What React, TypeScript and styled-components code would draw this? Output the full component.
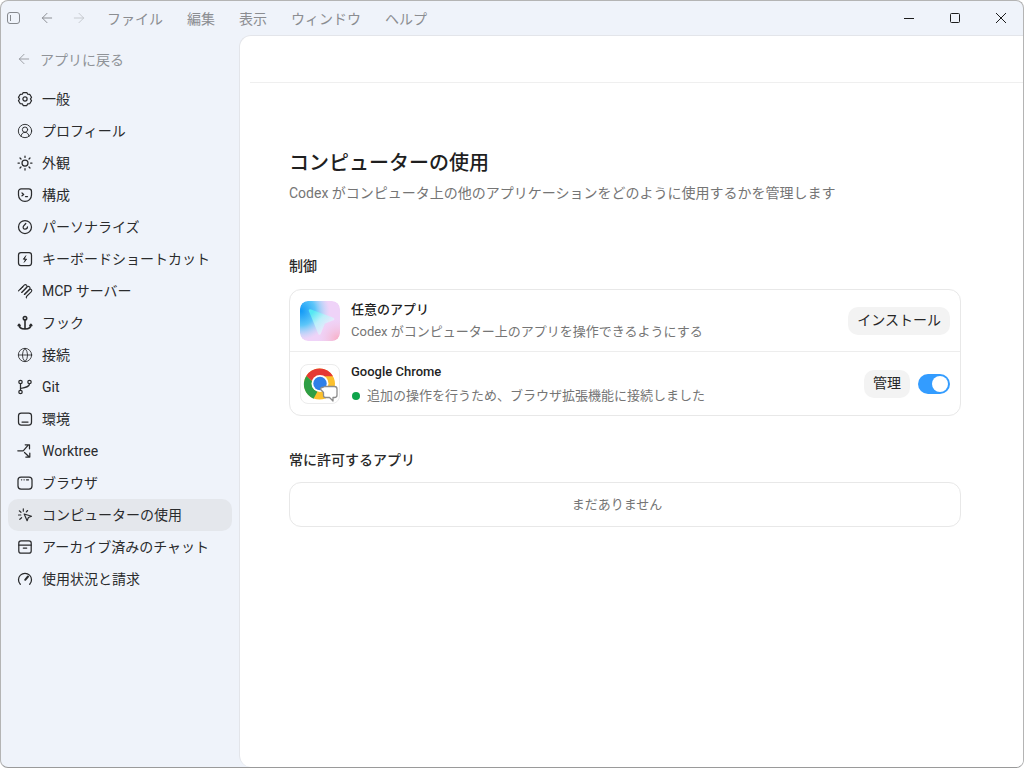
import React from "react";
import styled, { createGlobalStyle } from "styled-components";
import { ArrowLeft, ArrowRight, CircleUserRound, Globe } from "lucide-react";

const GlobalStyle = createGlobalStyle`
  html, body { margin: 0; padding: 0; height: 100%; background: #fff; }
  body { font-family: Roboto, "Noto Sans CJK JP", sans-serif; color: #1f1f1f; }
  * { box-sizing: border-box; }
`;

const Svg = ({ children, strokeWidth = 1.25 }: { children: React.ReactNode; strokeWidth?: number }) => (
  <svg width={16} height={16} viewBox="0 0 16 16" fill="none" stroke="currentColor" strokeWidth={strokeWidth} strokeLinecap="round" strokeLinejoin="round">
    {children}
  </svg>
);

const GearIcon = () => (
  <Svg>
    <path d="M6.200 1.500h3.600l.9 1.700 2 .1 1.800 3-1.100 1.700 1.100 1.700-1.800 3-2 .1-.9 1.700H6.200l-.9-1.700-2-.1-1.800-3L2.600 8 1.500 6.300l1.800-3 2-.1z" />
    <circle cx="8" cy="8" r="2.100" />
  </Svg>
);
const SunIcon = () => (
  <Svg>
    <circle cx="8" cy="8" r="3" />
    <path d="M8 1v1.400M8 13.600V15M1 8h1.400M13.600 8H15M3 3l1 1M12 12l1 1M3 13l1-1M12 4l1-1" />
  </Svg>
);
const TerminalShield = () => (
  <Svg>
    <path d="M4.200 1.800h7.600a2.700 2.700 0 0 1 2.700 2.700V8A6.500 6.500 0 0 1 1.500 8V4.500a2.700 2.700 0 0 1 2.700-2.700z" />
    <path d="M5 6l1.700 1.400L5 8.800M8.500 9.500h2" />
  </Svg>
);
const PersonalIcon = () => (
  <Svg>
    <circle cx="8" cy="8" r="6.500" />
    <path d="M8.800 4.500L6.500 7.200c-.9 1.300 0 3 1.500 3s2.500-1 2.500-2.400" />
  </Svg>
);
const KeyboardIcon = () => (
  <Svg>
    <rect x="1.500" y="1.500" width="13" height="13" rx="2.500" />
    <path d="M8.800 4.800L6.400 8.200h3.200L7.200 11.200" fill="currentColor" strokeWidth="1" />
  </Svg>
);
const McpIcon = () => (
  <Svg strokeWidth={1.1}>
    <path d="M1.500 7.800L7.200 2.100a1.700 1.700 0 0 1 2.400 2.400L4.800 9.300" />
    <path d="M4.800 9.300l5.400-5.400a1.700 1.700 0 0 1 2.400 2.400L7.400 11.500" />
    <path d="M7.400 11.500l5-5a1.500 1.500 0 0 1 2 2.200L9.500 13.500a1 1 0 0 0 0 1.300" />
    <path d="M4.300 5.300L3.500 6.100M6 3.700L5.200 4.500" />
  </Svg>
);
const AnchorIcon = () => (
  <Svg strokeWidth={1.6}>
    <circle cx="8" cy="3.200" r="1.700" />
    <path d="M8 5v9M2 9.500c0 2.800 2.500 4.500 6 4.500s6-1.700 6-4.500M1.200 10.500l.9-1.200 1 1.200M12.900 10.500l1-1.200.9 1.200" />
  </Svg>
);
const GitIcon = () => (
  <Svg>
    <circle cx="3.500" cy="3" r="1.700" />
    <circle cx="12.500" cy="3" r="1.700" />
    <circle cx="3.500" cy="13" r="1.700" />
    <path d="M3.500 4.700v6.600M12.500 4.700c0 3-3.500 3.800-9 4.800" />
  </Svg>
);
const EnvIcon = () => (
  <Svg>
    <rect x="1.500" y="2" width="13" height="12" rx="2.800" />
    <path d="M5 11h6" />
  </Svg>
);
const WorktreeIcon = () => (
  <Svg>
    <path d="M.8 7.800h5.400L11.200 2.200M8.200 1.800h4.300v4M7.500 9.500l4.500 4.300M12.800 10v4H8.800" />
  </Svg>
);
const BrowserIcon = () => (
  <Svg>
    <rect x="1" y="2" width="14" height="12" rx="3" />
    <path d="M4.500 4.800h.2M7 4.800h.2M9.500 4.800h2" />
  </Svg>
);
const ComputerIcon = () => (
  <Svg strokeWidth={1.15}>
    <path d="M7.200 7L14.500 9.300l-3.100 1.200-1.300 3.200z" />
    <path d="M6.300 1.800v2.400M2.300 3.800L4 5.300M1.500 8h2.300M2.800 12.300L4.600 10.700M10.600 3.500L9.300 5" />
  </Svg>
);
const ArchiveIcon = () => (
  <Svg>
    <rect x="1.800" y="1.800" width="12.400" height="12.400" rx="2.200" />
    <path d="M1.800 6h12.400M6.300 9h3.400" />
  </Svg>
);
const GaugeIcon = () => (
  <Svg>
    <path d="M3.300 13.300A6.500 6.500 0 1 1 12.700 13.300" />
    <path d="M11 5.500L8.200 8.800" strokeWidth="2" />
  </Svg>
);

const AnyAppLogo = () => (
  <svg width="40" height="40" viewBox="0 0 40 40">
    <defs>
      <radialGradient id="blobBlue" cx="0.02" cy="0.25" r="0.72">
        <stop offset="0" stopColor="#1299f6" />
        <stop offset="0.5" stopColor="#5cc6f9" />
        <stop offset="1" stopColor="#a8dcfa" stopOpacity="0" />
      </radialGradient>
      <radialGradient id="blobPink" cx="0.95" cy="0.95" r="0.5">
        <stop offset="0" stopColor="#f9aec4" />
        <stop offset="1" stopColor="#f2c9e8" stopOpacity="0" />
      </radialGradient>
      <linearGradient id="anyArrow" x1="0.1" y1="0.1" x2="0.8" y2="0.8">
        <stop offset="0" stopColor="#55e8f3" />
        <stop offset="0.45" stopColor="#bdeffa" />
        <stop offset="1" stopColor="#f3e8fc" />
      </linearGradient>
      <filter id="soft">
        <feGaussianBlur stdDeviation="0.7" />
      </filter>
    </defs>
    <rect width="40" height="40" rx="8" fill="#efd3f8" />
    <rect width="40" height="40" rx="8" fill="url(#blobBlue)" />
    <rect width="40" height="40" rx="8" fill="url(#blobPink)" />
    <path
      d="M10 9.500L33 18 24 21.500 19.500 32.500z"
      fill="url(#anyArrow)"
      stroke="url(#anyArrow)"
      strokeWidth="2.500"
      strokeLinejoin="round"
      filter="url(#soft)"
    />
  </svg>
);

const ChromeLogo = () => (
  <svg width="38" height="38" viewBox="0 0 38 38">
    <circle cx="18.500" cy="19" r="15.500" fill="#fbc02d" />
    <path d="M18.500 3.500A15.500 15.500 0 0 1 32 11.300H18.500a7.800 7.800 0 0 0-7.300 5L5.300 11A15.500 15.500 0 0 1 18.500 3.500z" fill="#e53935" />
    <path d="M5.300 11l6 5.400a7.800 7.800 0 0 0 5.200 10l-4 7.300A15.500 15.500 0 0 1 5.300 11z" fill="#2e9e45" />
    <circle cx="19" cy="18.500" r="8.500" fill="#fff" />
    <circle cx="19" cy="18.500" r="6.700" fill="#2f7fe8" />
    <path
      d="M24 21.500h9.500a2.500 2.500 0 0 1 2.500 2.500v6a2.500 2.500 0 0 1-2.500 2.500H32v3.500l-3.500-3.500h-4a2 2 0 0 1-2-2v-3l-2-2.200a1.500 1.500 0 0 1 1-2.800z"
      fill="#fff"
      stroke="#8c8c8c"
      strokeWidth="1.300"
      strokeLinejoin="round"
    />
  </svg>
);

const Window = styled.div`
  width: 1024px;
  height: 768px;
  display: flex;
  flex-direction: column;
  background: #eff3fa;
  border: 1px solid #b4b4b4;
  border-bottom-color: #9a9a9a;
  border-radius: 8px;
  overflow: hidden;
`;

const TitleBar = styled.div`
  height: 34px;
  flex: none;
  display: flex;
  align-items: center;
  padding-left: 6px;
`;

const BarIcon = styled.span<{ $dim?: boolean }>`
  display: flex;
  margin-right: 16px;
  color: ${(p) => (p.$dim ? "#c4c7cc" : "#85888d")};
`;

const PanelToggle = styled.span`
  width: 13px;
  height: 12px;
  margin-right: 19px;
  border: 1px solid #85888d;
  border-radius: 3px;
  display: flex;
  padding: 2px 0 2px 2px;
  &::before {
    content: "";
    width: 1px;
    background: #85888d;
  }
`;

const MenuRow = styled.div`
  display: flex;
  gap: 24px;
  margin-left: 4px;
`;

const MenuLabel = styled.span`
  font-size: 14px;
  color: #8b8d91;
`;

const WindowControls = styled.div`
  margin-left: auto;
  margin-right: -1px;
  display: flex;
  height: 100%;
`;

const ControlButton = styled.span`
  width: 46px;
  height: 100%;
  display: flex;
  align-items: center;
  justify-content: center;
  color: #1c1c1c;
`;

const Body = styled.div`
  flex: 1;
  display: flex;
  min-height: 0;
`;

const Sidebar = styled.nav`
  width: 238px;
  flex: none;
  padding: 0 7px;
  display: flex;
  flex-direction: column;
`;

const BackLink = styled.div`
  height: 48px;
  display: flex;
  align-items: center;
  gap: 8px;
  padding-left: 8px;
  font-size: 14px;
  color: #909398;
`;

const NavItem = styled.div<{ $active?: boolean }>`
  height: 32px;
  display: flex;
  align-items: center;
  gap: 9px;
  padding-left: 9px;
  border-radius: 10px;
  font-size: 14px;
  line-height: 20px;
  color: #2a2b2d;
  background: ${(p) => (p.$active ? "#e4e7ec" : "transparent")};
`;

const Main = styled.main`
  flex: 1;
  background: #fff;
  border-top: 1px solid #e3e5ea;
  border-left: 1px solid #e3e5ea;
  border-top-left-radius: 12px;
  border-bottom-left-radius: 12px;
  display: flex;
  flex-direction: column;
`;

const TopStrip = styled.div`
  height: 47px;
  flex: none;
  margin-left: 10px;
  border-bottom: 1px solid #efefef;
`;

const Content = styled.div`
  width: 672px;
  margin-left: 49px;
  padding-top: 67px;
`;

const Heading = styled.h1`
  margin: 0;
  font-size: 20px;
  line-height: 26px;
  font-weight: 500;
  color: #1f1f1f;
`;

const Subheading = styled.p`
  margin: 6px 0 0;
  font-size: 14px;
  line-height: 22px;
  color: #757575;
`;

const SectionTitle = styled.h2<{ $top: number; $bottom: number }>`
  margin: ${(p) => p.$top}px 0 ${(p) => p.$bottom}px;
  font-size: 14px;
  line-height: 20px;
  font-weight: 500;
  color: #2a2a2a;
`;

const Card = styled.div`
  border: 1px solid #e8e8e8;
  border-radius: 12px;
`;

const Row = styled.div<{ $height: number }>`
  height: ${(p) => p.$height}px;
  display: flex;
  align-items: center;
  padding: 0 10px;
  & + & {
    border-top: 1px solid #ededed;
  }
`;

const LogoBox = styled.div<{ $framed?: boolean }>`
  width: 40px;
  height: 40px;
  flex: none;
  border-radius: 8px;
  overflow: hidden;
  display: flex;
  align-items: center;
  justify-content: center;
  margin-right: 11px;
  border: ${(p) => (p.$framed ? "1px solid #ececec" : "none")};
`;

const RowText = styled.div<{ $gap: number }>`
  flex: 1;
  display: flex;
  flex-direction: column;
  gap: ${(p) => p.$gap}px;
`;

const RowTitle = styled.div`
  font-size: 13px;
  line-height: 20px;
  font-weight: 500;
  color: #1f1f1f;
`;

const RowDesc = styled.div`
  display: flex;
  align-items: center;
  gap: 7px;
  font-size: 13px;
  line-height: 20px;
  color: #757575;
`;

const StatusDot = styled.span`
  width: 8px;
  height: 8px;
  margin-left: 1px;
  border-radius: 50%;
  background: #0ea44b;
`;

const PillButton = styled.button`
  all: unset;
  height: 28px;
  padding: 0 9px;
  border-radius: 10px;
  background: #f3f3f3;
  font-size: 14px;
  line-height: 27px;
  color: #262626;
`;

const Toggle = styled.span`
  width: 32px;
  height: 20px;
  margin-left: 8px;
  border-radius: 10px;
  background: #339cff;
  display: flex;
  justify-content: flex-end;
  align-items: center;
  padding-right: 2px;
  &::after {
    content: "";
    width: 16px;
    height: 16px;
    border-radius: 50%;
    background: #fff;
  }
`;

const EmptyCard = styled(Card)`
  height: 45px;
  display: flex;
  align-items: center;
  justify-content: center;
  padding: 0 16px 2px 0;
  font-size: 13px;
  color: #757575;
`;

const navItems: { icon: React.ReactNode; label: string; active?: boolean }[] = [
  { icon: <GearIcon />, label: "一般" },
  { icon: <CircleUserRound size={16} strokeWidth={1.4} />, label: "プロフィール" },
  { icon: <SunIcon />, label: "外観" },
  { icon: <TerminalShield />, label: "構成" },
  { icon: <PersonalIcon />, label: "パーソナライズ" },
  { icon: <KeyboardIcon />, label: "キーボードショートカット" },
  { icon: <McpIcon />, label: "MCP サーバー" },
  { icon: <AnchorIcon />, label: "フック" },
  { icon: <Globe size={16} strokeWidth={1.3} />, label: "接続" },
  { icon: <GitIcon />, label: "Git" },
  { icon: <EnvIcon />, label: "環境" },
  { icon: <WorktreeIcon />, label: "Worktree" },
  { icon: <BrowserIcon />, label: "ブラウザ" },
  { icon: <ComputerIcon />, label: "コンピューターの使用", active: true },
  { icon: <ArchiveIcon />, label: "アーカイブ済みのチャット" },
  { icon: <GaugeIcon />, label: "使用状況と請求" },
];

const menus = ["ファイル", "編集", "表示", "ウィンドウ", "ヘルプ"];

export default function App() {
  return (
    <>
      <GlobalStyle />
      <Window>
        <TitleBar>
          <PanelToggle />
          <BarIcon>
            <ArrowLeft size={16} strokeWidth={1.4} />
          </BarIcon>
          <BarIcon $dim>
            <ArrowRight size={16} strokeWidth={1.4} />
          </BarIcon>
          <MenuRow>
            {menus.map((m) => (
              <MenuLabel key={m}>{m}</MenuLabel>
            ))}
          </MenuRow>
          <WindowControls>
            <ControlButton>
              <svg width="12" height="12" viewBox="0 0 12 12" stroke="currentColor" fill="none">
                <path d="M1 6.500h10" />
              </svg>
            </ControlButton>
            <ControlButton>
              <svg width="12" height="12" viewBox="0 0 12 12" stroke="currentColor" fill="none">
                <rect x="1.500" y="1.500" width="9" height="9" rx="1" />
              </svg>
            </ControlButton>
            <ControlButton>
              <svg width="12" height="12" viewBox="0 0 12 12" stroke="currentColor" fill="none">
                <path d="M1 1l10 10M11 1L1 11" />
              </svg>
            </ControlButton>
          </WindowControls>
        </TitleBar>
        <Body>
          <Sidebar>
            <BackLink>
              <ArrowLeft size={16} strokeWidth={1.3} />
              アプリに戻る
            </BackLink>
            {navItems.map((item) => (
              <NavItem key={item.label} $active={item.active}>
                {item.icon}
                {item.label}
              </NavItem>
            ))}
          </Sidebar>
          <Main>
            <TopStrip />
            <Content>
              <Heading>コンピューターの使用</Heading>
              <Subheading>Codex がコンピュータ上の他のアプリケーションをどのように使用するかを管理します</Subheading>
              <SectionTitle $top={52} $bottom={13}>
                制御
              </SectionTitle>
              <Card>
                <Row $height={61}>
                  <LogoBox>
                    <AnyAppLogo />
                  </LogoBox>
                  <RowText $gap={2}>
                    <RowTitle>任意のアプリ</RowTitle>
                    <RowDesc>Codex がコンピューター上のアプリを操作できるようにする</RowDesc>
                  </RowText>
                  <PillButton>インストール</PillButton>
                </Row>
                <Row $height={64}>
                  <LogoBox $framed>
                    <ChromeLogo />
                  </LogoBox>
                  <RowText $gap={4}>
                    <RowTitle>Google Chrome</RowTitle>
                    <RowDesc>
                      <StatusDot />
                      追加の操作を行うため、ブラウザ拡張機能に接続しました
                    </RowDesc>
                  </RowText>
                  <PillButton>管理</PillButton>
                  <Toggle />
                </Row>
              </Card>
              <SectionTitle $top={34} $bottom={12}>
                常に許可するアプリ
              </SectionTitle>
              <EmptyCard>まだありません</EmptyCard>
            </Content>
          </Main>
        </Body>
      </Window>
    </>
  );
}
